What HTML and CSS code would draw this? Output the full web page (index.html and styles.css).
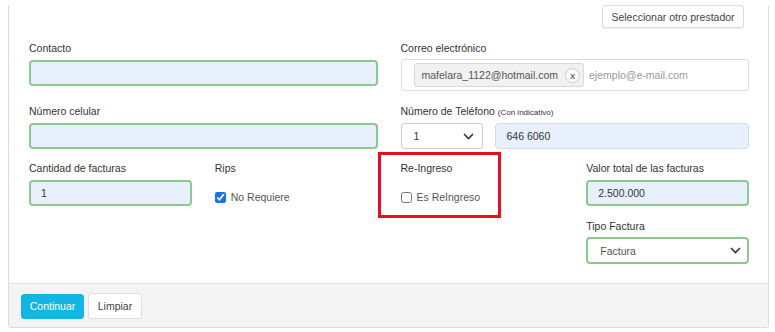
FILE: index.html
```html
<!DOCTYPE html>
<html lang="es">
<head>
  <meta charset="UTF-8" />
  <title>Datos de facturación</title>
  <link rel="stylesheet" href="styles.css">
</head>
<body>
  <div class="card">
    <div class="card-body">
      <div class="top-row">
        <button class="btn btn-default btn-top">Seleccionar otro prestador</button>
      </div>

      <div class="row row-2">
        <div class="field">
          <label class="lbl">Contacto</label>
          <div class="input filled ok"></div>
        </div>
        <div class="field">
          <label class="lbl lbl-tight">Correo electrónico</label>
          <div class="tags-box">
            <span class="tag">mafelara_1122@hotmail.com <span class="tag-x">x</span></span>
            <span class="placeholder">ejemplo@e-mail.com</span>
          </div>
        </div>
      </div>

      <div class="row row-2 mt13">
        <div class="field">
          <label class="lbl">Número celular</label>
          <div class="input filled ok"></div>
        </div>
        <div class="field">
          <label class="lbl">Número de Teléfono <small>(Con indicativo)</small></label>
          <div class="phone">
            <div class="select select-code">
              <span>1</span>
              <svg width="11" height="7" viewBox="0 0 11 7"><polyline points="1,1 5.5,5.5 10,1" fill="none" stroke="#333" stroke-width="1.6"/></svg>
            </div>
            <div class="input filled plain">646 6060</div>
          </div>
        </div>
      </div>

      <div class="row row-4 mt12">
        <div class="field">
          <label class="lbl">Cantidad de facturas</label>
          <div class="input filled ok">1</div>
        </div>
        <div class="field">
          <label class="lbl">Rips</label>
          <label class="check"><input type="checkbox" checked> No Requiere</label>
        </div>
        <div class="field">
          <label class="lbl">Re-Ingreso</label>
          <label class="check"><input type="checkbox"> Es ReIngreso</label>
        </div>
        <div class="field">
          <label class="lbl">Valor total de las facturas</label>
          <div class="input filled ok">2.500.000</div>
          <label class="lbl lbl-tight mt13">Tipo Factura</label>
          <div class="select select-type">
            <span>Factura</span>
            <svg width="11" height="7" viewBox="0 0 11 7"><polyline points="1,1 5.5,5.5 10,1" fill="none" stroke="#333" stroke-width="1.6"/></svg>
          </div>
        </div>
        <div class="highlight"></div>
      </div>
    </div>

    <div class="card-footer">
      <button class="btn btn-primary">Continuar</button>
      <button class="btn btn-default">Limpiar</button>
    </div>
  </div>
</body>
</html>
```

FILE: styles.css
```css
* {
  margin: 0;
  padding: 0;
  box-sizing: border-box;
  font-family: 'Liberation Sans', Arial, sans-serif;
}

body {
  background: #fff;
  color: #333;
  font-size: 10.5px;
}

.card {
  margin: 10px 6px 0 8px;
  border: 1px solid #dddddd;
  border-top: none;
  border-radius: 0 0 3px 3px;
}

.card-body {
  padding: 0 19px 19px 20px;
}

.top-row {
  display: flex;
  justify-content: flex-end;
  margin-top: -5px;
  padding-right: 5px;
  height: 23px;
}

.btn {
  height: 25px;
  padding: 0 10px;
  font-size: 10.5px;
  border-radius: 3px;
  border: 1px solid #dddddd;
  background: #fff;
  color: #444;
  cursor: pointer;
}

.btn-top {
  height: 23px;
  width: 142px;
  padding: 0;
  color: #555;
  box-shadow: 0 1px 1px rgba(0, 0, 0, 0.08);
}

.btn-primary {
  background: #13b5e3;
  border-color: #13b5e3;
  color: #fff;
  width: 63px;
  padding: 0;
}

.btn-default {
  color: #444;
}

.card-footer .btn-default {
  width: 54px;
  padding: 0;
  margin-left: 4px;
  height: 26px;
}

.row {
  display: grid;
  column-gap: 23px;
  align-items: start;
}

.row-2 {
  grid-template-columns: 1fr 1fr;
  margin-top: 13px;
}

.row-4 {
  grid-template-columns: repeat(4, 1fr);
  position: relative;
}

.mt12 { margin-top: 12px; }
.mt13 { margin-top: 13px; }

.field {
  display: flex;
  flex-direction: column;
}

.lbl {
  display: block;
  line-height: 14px;
  height: 14px;
  margin-bottom: 5px;
  color: #333;
}

.lbl-tight {
  margin-bottom: 4px;
}

.lbl small {
  font-size: 8px;
}

.input {
  height: 26px;
  border: 1px solid #ccc;
  border-radius: 4px;
  padding: 0 10px;
  line-height: 22px;
  color: #333;
}

.filled {
  background: #e8f0fe;
}

.ok {
  border: 2px solid #8cc98e;
}

.plain {
  border: 1px solid #d5dbe6;
  line-height: 24px;
  padding-left: 11px;
}

.tags-box {
  height: 32px;
  border: 1px solid #dddddd;
  border-radius: 3px;
  display: flex;
  align-items: center;
  padding-left: 12px;
  gap: 5px;
}

.tag {
  display: flex;
  align-items: center;
  gap: 7px;
  height: 24px;
  padding: 0 3px 0 7px;
  background: #f1f1f1;
  border: 1px solid #d8d8d8;
  border-radius: 3px;
  color: #555;
}

.tag-x {
  width: 15px;
  height: 15px;
  border-radius: 50%;
  border: 1px solid #ccc;
  background: #fafafa;
  font-size: 9.5px;
  line-height: 13px;
  text-align: center;
  color: #444;
}

.placeholder {
  color: #999;
}

.phone {
  display: flex;
  gap: 12px;
}

.phone .input {
  flex: 1;
}

.select {
  height: 26px;
  border: 1px solid #ccc;
  border-radius: 3px;
  background: #fff;
  display: flex;
  align-items: center;
  justify-content: space-between;
  padding: 0 8px 0 12px;
  color: #333;
}

.select-code {
  width: 82px;
}

.select-type {
  height: 27px;
  color: #555;
  padding-left: 12px;
  padding-right: 6px;
  border: 2px solid #8cc98e;
  border-radius: 4px;
}

.check {
  display: flex;
  align-items: center;
  gap: 5px;
  margin-top: 10px;
  color: #555;
  height: 14px;
}

.check input {
  width: 11px;
  height: 11px;
  margin: 0;
  accent-color: #1a73e8;
}

.highlight {
  position: absolute;
  left: 349px;
  top: -9px;
  width: 123px;
  height: 66px;
  border: 3px solid #e3131d;
  pointer-events: none;
}

.card-footer {
  background: #f4f4f4;
  border-top: 1px solid #e3e3e3;
  padding: 9px 12px 8px;
  display: flex;
  align-items: center;
}
```
